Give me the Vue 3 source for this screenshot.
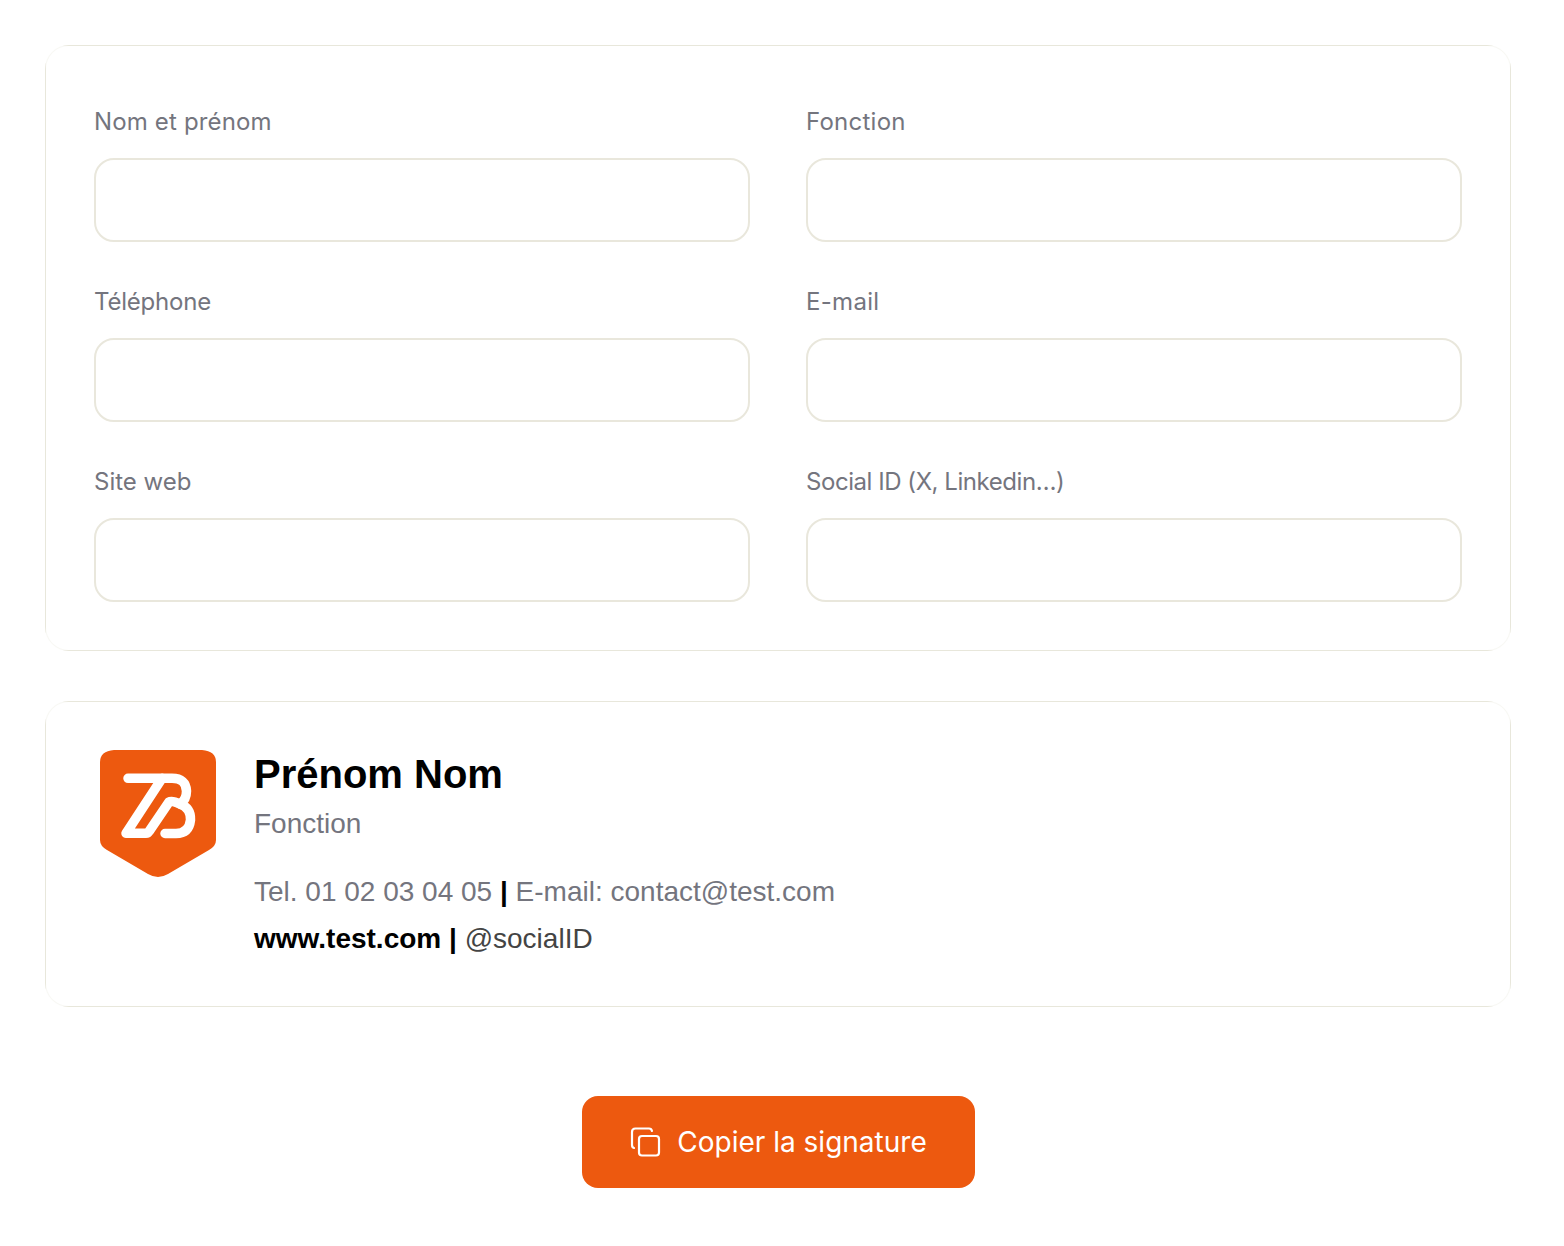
<script setup>
const fields = [
  { text: 'Nom et prénom', track: 0.15 },
  { text: 'Fonction', track: 0.25 },
  { text: 'Téléphone', track: -0.2 },
  { text: 'E-mail', track: 0.3 },
  { text: 'Site web', track: 0 },
  { text: 'Social ID (X, Linkedin…)', track: -0.45 }
]
</script>

<template>
  <main class="page">
    <section class="card form">
      <label v-for="f in fields" :key="f.text" class="field">
        <span class="label" :style="{ letterSpacing: f.track + 'px' }">{{ f.text }}</span>
        <input class="input" type="text" />
      </label>
    </section>

    <section class="card signature">
      <svg class="logo" viewBox="0 0 116 128" width="116" height="128" aria-hidden="true">
        <path fill="#ED590F" d="M14 0H102Q116 1 116 12V90Q116 96 109 100L68 124Q58 130 48 124L7 100Q0 96 0 90V12Q0 1 14 0Z"/>
        <g fill="none" stroke="#fff" stroke-width="9.500" stroke-linecap="round" stroke-linejoin="round">
          <path d="M28 28.300H72Q86 28.300 86.500 41Q86.500 50 80 54Q91 58 90.500 70Q89 83.500 76 83.500H65"/>
          <path d="M62 28.300L26 83.300H46Q48 83.300 49 81.500L69 52Q72 50 80 54"/>
        </g>
      </svg>
      <div class="details">
        <h2 class="name">Prénom Nom</h2>
        <p class="role">Fonction</p>
        <p class="line first">Tel. 01 02 03 04 05 <b class="sep">|</b> E-mail: contact@test.com</p>
        <p class="line"><b class="web">www.test.com | </b><span class="social">@socialID</span></p>
      </div>
    </section>

    <div class="actions">
      <button class="copy" type="button">
        <svg viewBox="0 0 32 32" width="32" height="32" fill="none" stroke="#fff" stroke-width="2.200" stroke-linecap="round" stroke-linejoin="round" aria-hidden="true">
          <rect x="10" y="10" width="20" height="19.500" rx="3"/>
          <path d="M3 19V6Q3 2.500 6.500 2.500H20Q22.500 2.500 23 5"/>
          <path d="M3 19Q3 21.500 5 22"/>
        </svg>
        <span>Copier la signature</span>
      </button>
    </div>
  </main>
</template>

<style>
body { background: #fff; }
</style>

<style scoped>
.page {
  box-sizing: border-box;
  width: 1564px;
  height: 1246px;
  padding: 45px 53px 58px 45px;
  display: flex;
  flex-direction: column;
}
.card {
  box-sizing: border-box;
  width: 1466px;
  border: 1px solid rgba(233, 231, 220, 0.3);
  border-radius: 24px;
  background-color: #fff;
  background-origin: border-box;
  background-clip: border-box;
  background-repeat: no-repeat;
  background-image:
    linear-gradient(#e9e7dc, #e9e7dc),
    linear-gradient(#e9e7dc, #e9e7dc),
    linear-gradient(#e9e7dc, #e9e7dc),
    linear-gradient(#e9e7dc, #e9e7dc);
  background-size:
    calc(100% - 36px) 1px,
    calc(100% - 36px) 1px,
    1px calc(100% - 36px),
    1px calc(100% - 36px);
  background-position: center top, center bottom, left center, right center;
}
.form {
  height: 606px;
  padding: 48px;
  display: grid;
  grid-template-columns: 656px 656px;
  grid-template-rows: repeat(3, 148px);
  column-gap: 56px;
  row-gap: 32px;
}
.field {
  display: flex;
  flex-direction: column;
}
.label {
  height: 64px;
  padding-top: 12px;
  box-sizing: border-box;
  font: 400 24px/32px "Inter", sans-serif;
  color: #74757e;
}
.input {
  box-sizing: border-box;
  width: 656px;
  height: 84px;
  flex: none;
  border: 2px solid #e9e7dc;
  border-radius: 20px;
  background: #fff;
  outline: none;
}
.signature {
  margin-top: 50px;
  height: 306px;
  padding: 48px 0 0 54px;
  display: flex;
  gap: 38px;
  font-family: "Liberation Sans", Arial, sans-serif;
}
.logo { flex: none; display: block; }
.details { flex: 1; }
.name {
  margin: 0;
  font-size: 40px;
  line-height: 48px;
  font-weight: 700;
  color: #000;
}
.role {
  margin: 10px 0 0;
  font-size: 28px;
  line-height: 32px;
  color: #74757e;
}
.line {
  margin: 0;
  font-size: 28px;
  line-height: 47px;
  color: #74757e;
}
.first { margin-top: 28px; }
.sep, .web { color: #000; }
.social { color: #444; }
.actions {
  margin-top: 89px;
  display: flex;
  justify-content: center;
}
.copy {
  width: 393px;
  height: 92px;
  border: 0;
  border-radius: 16px;
  background: #ed590f;
  color: #fff;
  display: flex;
  align-items: center;
  justify-content: center;
  gap: 16px;
  font: 400 28px/36px "Inter", sans-serif;
  padding: 0;
}
</style>
